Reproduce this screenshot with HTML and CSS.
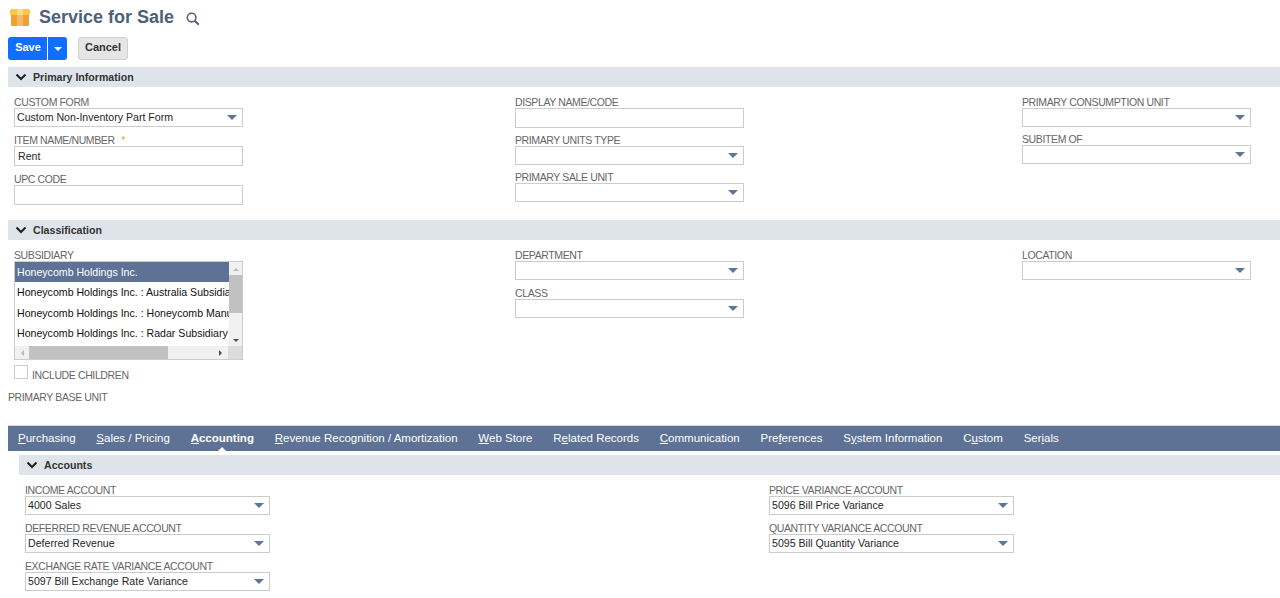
FILE: index.html
```html
<!DOCTYPE html>
<html lang="en">
<head>
<meta charset="utf-8">
<title>Service for Sale</title>
<link rel="stylesheet" href="styles.css">
</head>
<body>
<svg class="defs" width="0" height="0" aria-hidden="true">
  <symbol id="chev" viewBox="0 0 12 8"><path d="M1.5 1.5 6 6l4.5-4.5" fill="none" stroke="#1f1f1f" stroke-width="2"/></symbol>
</svg>
<header class="title-row">
  <svg class="logo" width="20" height="17" viewBox="0 0 20 17" aria-hidden="true">
    <path d="M0 6V2a2 2 0 0 1 2-2h16a2 2 0 0 1 2 2v4Z" fill="#f8c64a"/>
    <path d="M1 6h18v10a1 1 0 0 1-1 1H2a1 1 0 0 1-1-1Z" fill="#ef9f33"/>
    <path d="M7 0h6v6H7Z" fill="#fbdc8a"/>
    <path d="M7 6h6v11H7Z" fill="#f5b964"/>
  </svg>
  <h1 class="title">Service for Sale</h1>
  <svg class="search" width="14" height="14" viewBox="0 0 14 14" aria-hidden="true">
    <circle cx="5.6" cy="5.6" r="4.3" fill="none" stroke="#51647f" stroke-width="1.6"/>
    <path d="m8.8 8.8 4 4" stroke="#51647f" stroke-width="2"/>
  </svg>
</header>
<div class="actions">
  <div class="save-group">
    <button class="btn-save" type="button">Save</button>
    <button class="btn-save-arrow" type="button" aria-label="More"><span class="arrow-white"></span></button>
  </div>
  <button class="btn-cancel" type="button">Cancel</button>
</div>

<section class="section">
  <div class="bar"><svg class="chev"><use href="#chev"/></svg><span>Primary Information</span></div>
  <div class="cols cols-three primary">
    <div class="col col-roomy">
      <div class="field"><label>CUSTOM FORM</label><div class="control"><span>Custom Non-Inventory Part Form</span><i class="caret"></i></div></div>
      <div class="field"><label>ITEM NAME/NUMBER <b class="req">*</b></label><div class="control tall"><span>Rent</span></div></div>
      <div class="field"><label>UPC CODE</label><div class="control tall"></div></div>
    </div>
    <div class="col">
      <div class="field"><label>DISPLAY NAME/CODE</label><div class="control tall"></div></div>
      <div class="field"><label>PRIMARY UNITS TYPE</label><div class="control"><i class="caret"></i></div></div>
      <div class="field"><label>PRIMARY SALE UNIT</label><div class="control"><i class="caret"></i></div></div>
    </div>
    <div class="col">
      <div class="field"><label>PRIMARY CONSUMPTION UNIT</label><div class="control"><i class="caret"></i></div></div>
      <div class="field"><label>SUBITEM OF</label><div class="control"><i class="caret"></i></div></div>
    </div>
  </div>
</section>

<section class="section classification">
  <div class="bar"><svg class="chev"><use href="#chev"/></svg><span>Classification</span></div>
  <div class="cols cols-three class-cols">
    <div class="col">
      <div class="field">
        <label>SUBSIDIARY</label>
        <div class="listbox">
          <div class="list-main">
            <ul class="list-rows">
              <li class="selected">Honeycomb Holdings Inc.</li>
              <li>Honeycomb Holdings Inc. : Australia Subsidiary</li>
              <li>Honeycomb Holdings Inc. : Honeycomb Manufacturing</li>
              <li>Honeycomb Holdings Inc. : Radar Subsidiary</li>
            </ul>
            <div class="vscroll">
              <i class="sb-up"></i>
              <div class="vtrack"><div class="vthumb"></div></div>
              <i class="sb-down"></i>
            </div>
          </div>
          <div class="hscroll">
            <i class="sb-left"></i>
            <div class="htrack"><div class="hthumb"></div></div>
            <i class="sb-right"></i>
            <div class="corner"></div>
          </div>
        </div>
      </div>
      <div class="check-row"><span class="checkbox"></span><label>INCLUDE CHILDREN</label></div>
    </div>
    <div class="col col-roomy">
      <div class="field"><label>DEPARTMENT</label><div class="control"><i class="caret"></i></div></div>
      <div class="field"><label>CLASS</label><div class="control"><i class="caret"></i></div></div>
    </div>
    <div class="col">
      <div class="field"><label>LOCATION</label><div class="control"><i class="caret"></i></div></div>
    </div>
  </div>
  <div class="base-unit">PRIMARY BASE UNIT</div>
</section>

<nav class="tabs">
  <a><u>P</u>urchasing</a>
  <a><u>S</u>ales / Pricing</a>
  <a class="active"><u>A</u>ccounting</a>
  <a><u>R</u>evenue Recognition / Amortization</a>
  <a><u>W</u>eb Store</a>
  <a>R<u>e</u>lated Records</a>
  <a><u>C</u>ommunication</a>
  <a>Pre<u>f</u>erences</a>
  <a>S<u>y</u>stem Information</a>
  <a>C<u>u</u>stom</a>
  <a>Ser<u>i</u>als</a>
</nav>

<section class="subsection">
  <div class="bar"><svg class="chev"><use href="#chev"/></svg><span>Accounts</span></div>
  <div class="cols cols-two">
    <div class="col col-roomy">
      <div class="field"><label>INCOME ACCOUNT</label><div class="control"><span>4000 Sales</span><i class="caret"></i></div></div>
      <div class="field"><label>DEFERRED REVENUE ACCOUNT</label><div class="control"><span>Deferred Revenue</span><i class="caret"></i></div></div>
      <div class="field"><label>EXCHANGE RATE VARIANCE ACCOUNT</label><div class="control"><span>5097 Bill Exchange Rate Variance</span><i class="caret"></i></div></div>
    </div>
    <div class="col col-roomy">
      <div class="field"><label>PRICE VARIANCE ACCOUNT</label><div class="control"><span>5096 Bill Price Variance</span><i class="caret"></i></div></div>
      <div class="field"><label>QUANTITY VARIANCE ACCOUNT</label><div class="control"><span>5095 Bill Quantity Variance</span><i class="caret"></i></div></div>
    </div>
  </div>
</section>
</body>
</html>
```
FILE: styles.css
```css
* { box-sizing: border-box; }
html, body { margin: 0; padding: 0; }
body {
  height: 598px;
  overflow: hidden;
  background: #fff;
  font-family: "Liberation Sans", Arial, sans-serif;
  font-size: 10.6px;
  color: #262626;
}
.defs { position: absolute; }

.title-row { display: flex; align-items: center; height: 34px; padding: 0 0 0 10px; }
.logo { flex: none; }
.title { margin: 0 0 0 9px; font-size: 18px; font-weight: 700; color: #4d5f79; }
.search { margin: 4px 0 0 12px; }

.actions { display: flex; align-items: flex-start; height: 33px; padding: 3px 0 0 8px; }
.save-group { display: flex; height: 23px; }
.btn-save, .btn-save-arrow {
  border: 0; background: #0f6fff; color: #fff;
  font: 700 11px "Liberation Sans", Arial, sans-serif;
}
.btn-save { width: 39px; padding: 0 0 3px 1px; border-radius: 3px 0 0 3px; }
.btn-save-arrow { width: 19px; padding: 0; margin-left: 1px; border-radius: 0 3px 3px 0; display: flex; align-items: center; justify-content: center; }
.arrow-white { width: 0; height: 0; border: 4px solid transparent; border-top-color: #fff; border-bottom-width: 0; }
.btn-cancel {
  width: 50px; height: 23px; margin-left: 11px; padding: 0 0 3px;
  background: #e5e5e5; border: 1px solid #cfcfcf; border-radius: 3px;
  font: 700 11px "Liberation Sans", Arial, sans-serif; color: #333;
}

.bar {
  display: flex; align-items: center; height: 20px; margin-left: 8px; padding: 0 0 1px 7px;
  background: #dfe4eb; font-weight: 700; font-size: 10.6px; color: #333;
}
.chev { width: 12px; height: 8px; flex: none; margin-right: 6px; }

.cols { display: grid; }
.cols-three { grid-template-columns: 501px 507px 229px; padding-left: 14px; }
.primary { height: 133px; padding-top: 9px; }
.class-cols { height: 151px; padding-top: 9px; }
.col { display: flex; flex-direction: column; gap: 6px; }
.col-roomy { gap: 7px; }
.field { display: flex; flex-direction: column; }
label, .base-unit { display: block; height: 12px; line-height: 12px; font-size: 10.5px; letter-spacing: -.38px; color: #666; }
.req { color: #e8a33c; font-weight: 400; margin-left: 4px; }
.control {
  position: relative; display: flex; align-items: center; width: 229px; height: 19px; padding: 0 0 2px 2px;
  background: #fff; border: 1px solid #ccc; font-size: 10.6px; color: #262626; white-space: nowrap;
}
.control.tall { height: 20px; padding: 0 0 0 3px; }
.caret {
  position: absolute; right: 5px; top: 6px; width: 0; height: 0;
  border-style: solid; border-width: 5px 5px 0 5px; border-color: #5e7699 transparent transparent;
}

.listbox { width: 229px; height: 99px; border: 1px solid #ccc; background: #fff; overflow: hidden; }
.list-main { display: flex; height: 84px; }
.list-rows { list-style: none; margin: 0; padding: 0; width: 214px; overflow: hidden; }
.list-rows li { height: 20.4px; line-height: 20px; padding-left: 2px; white-space: nowrap; font-size: 10.6px; color: #111; overflow: hidden; }
.list-rows .selected { background: #5e7296; color: #fff; }
.vscroll { width: 13px; margin-left: 0; display: flex; flex-direction: column; background: #f1f1f1; align-items: center; }
.vtrack { flex: 1; width: 100%; }
.vthumb { height: 38px; background: #c1c1c1; }
.sb-up { flex: none; width: 0; height: 0; margin: 6px 0 4px; border: 3.5px solid transparent; border-top-width: 0; border-bottom: 3px solid #bbb; }
.sb-down { flex: none; width: 0; height: 0; margin: 3px 0 4px; border: 3.5px solid transparent; border-bottom-width: 0; border-top: 3px solid #505050; }
.hscroll { display: flex; align-items: center; height: 13px; background: #f1f1f1; }
.htrack { width: 190px; height: 100%; }
.hthumb { width: 139px; height: 100%; background: #c1c1c1; }
.sb-left, .sb-right { flex: none; width: 0; height: 0; border: 3.5px solid transparent; }
.sb-left { margin: 0 5px 0 6px; border-left-width: 0; border-right: 3px solid #bbb; }
.sb-right { margin: 0 6px 0 0; border-right-width: 0; border-left: 3px solid #505050; }
.corner { flex: 1; height: 100%; background: #dcdcdc; }
.check-row { display: flex; align-items: flex-end; margin-top: -1px; }
.checkbox { width: 14px; height: 14px; background: #fff; border: 1px solid #ccc; }
.check-row label { margin-left: 4px; margin-bottom: -2px; }
.base-unit { margin-left: 8px; }

.tabs {
  display: flex; align-items: center; gap: 20.8px; height: 26px; margin: 22px 0 0 8px; padding: 0 0 2px 10px;
  background: #5e7296; border-top: 1px solid #d5d9e0; color: #fff; font-size: 11.5px;
}
.tabs a { position: relative; white-space: nowrap; }
.tabs a.active { font-weight: 700; }
.tabs a.active::after {
  content: ""; position: absolute; left: 50%; bottom: -8px; margin-left: -5px; width: 0; height: 0;
  border: 5px solid transparent; border-top-width: 0; border-bottom-color: #fff;
}
.subsection { margin-top: 4px; }
.subsection .bar { margin-left: 19px; }
.cols-two { grid-template-columns: 744px 245px; padding: 9px 0 0 25px; }
.cols-two .control { width: 245px; }
```
